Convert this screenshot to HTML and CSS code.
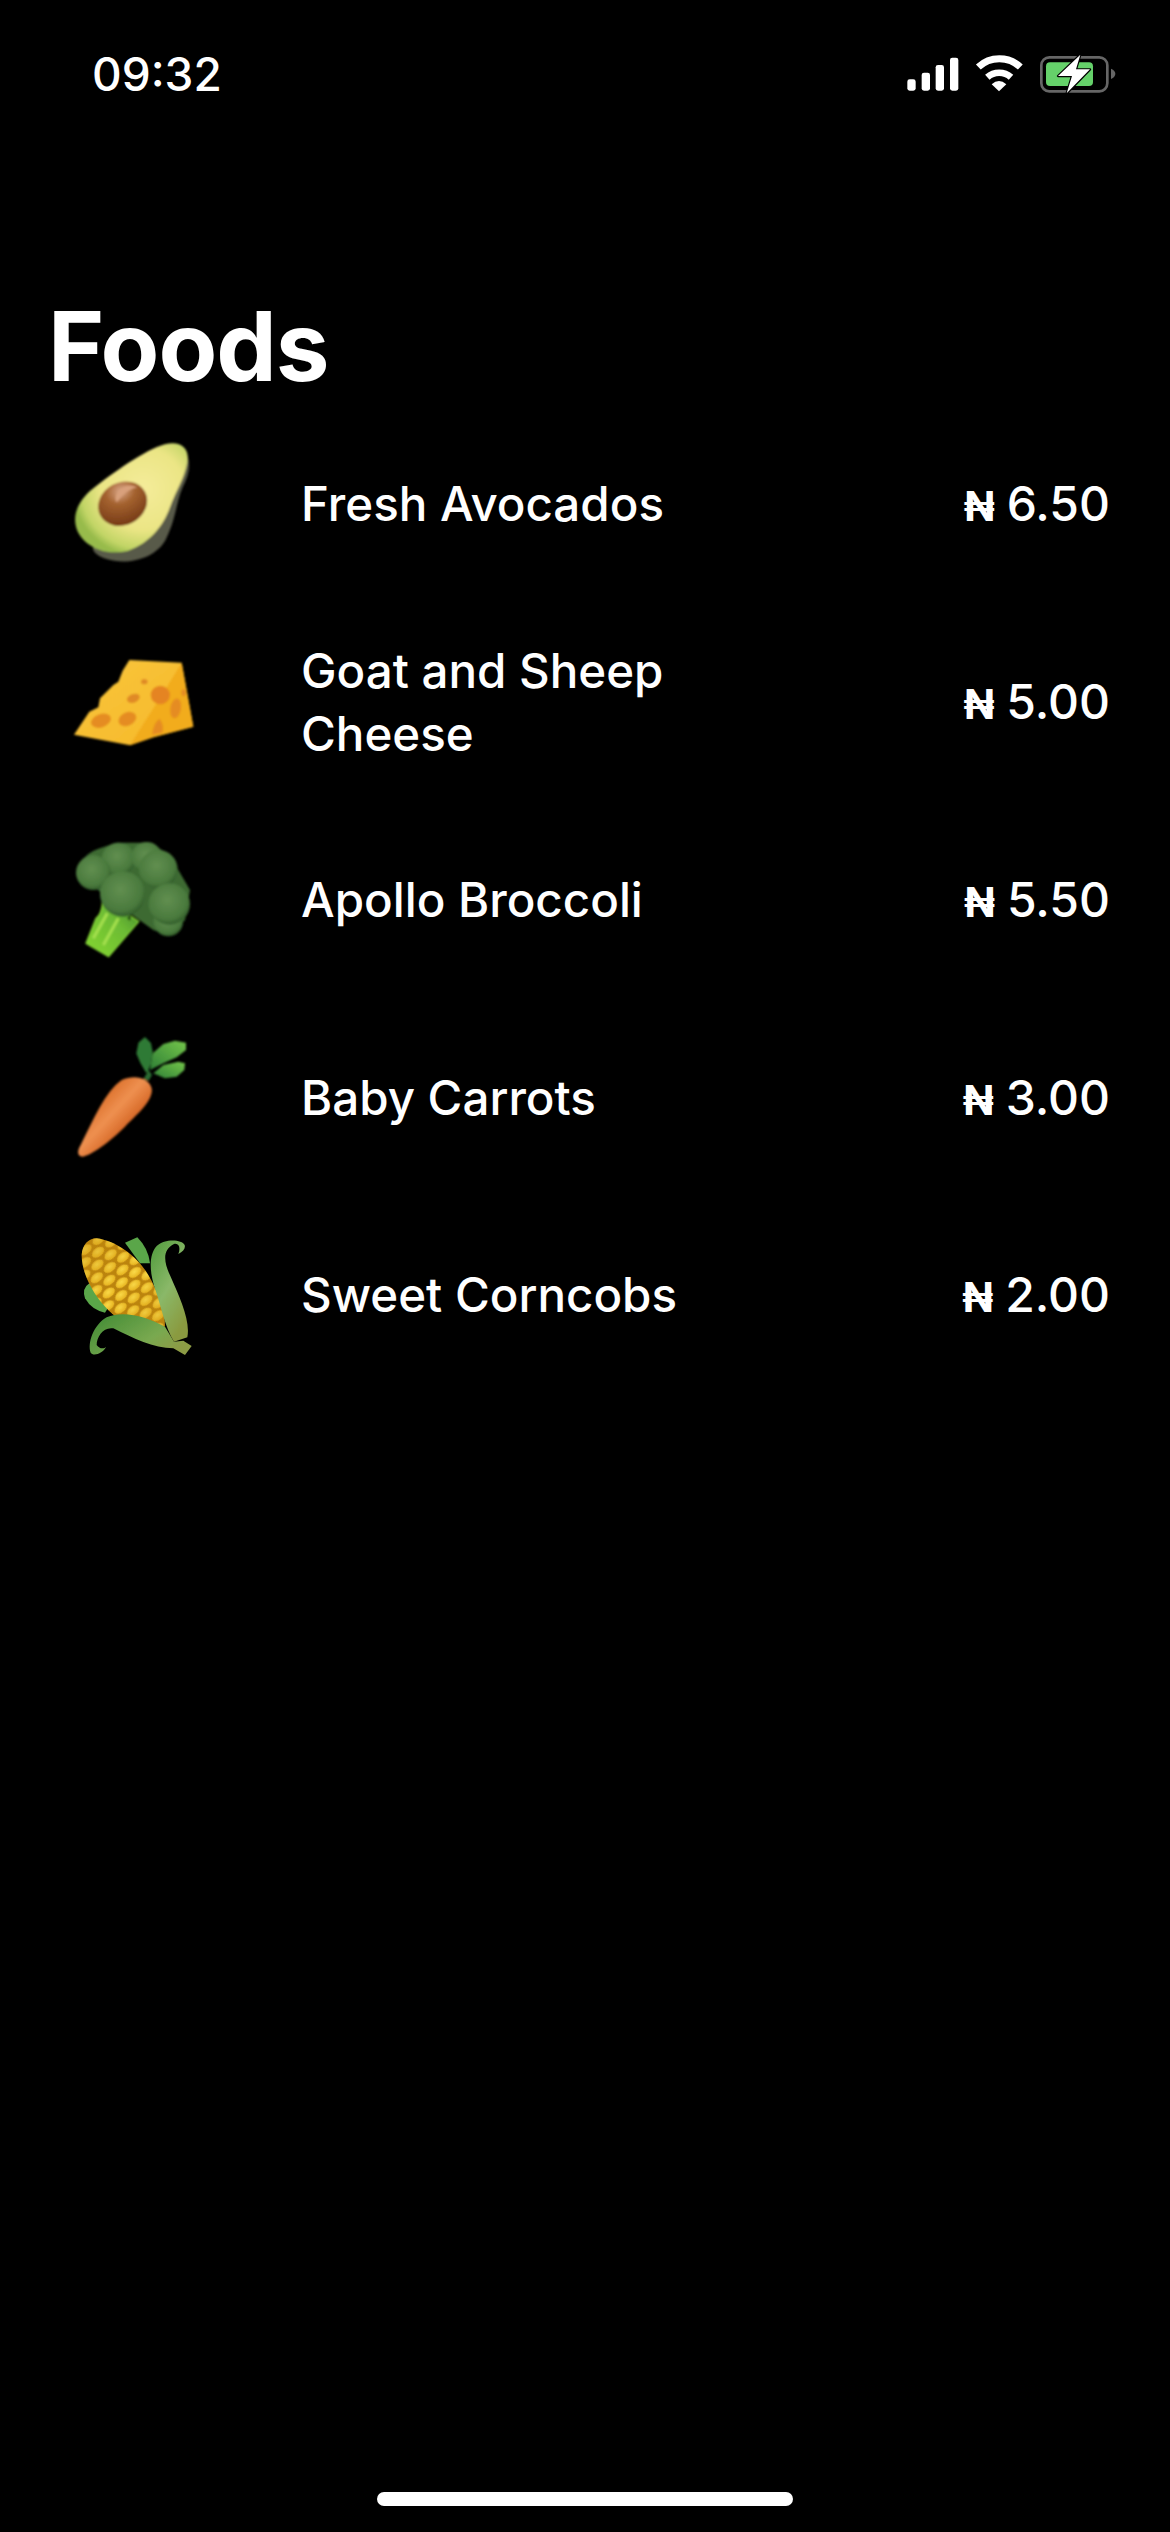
FILE: index.html
```html
<!DOCTYPE html>
<html lang="en">
<head>
<meta charset="utf-8">
<title>Foods</title>
<link rel="stylesheet" href="styles.css">
</head>
<body>
<div class="screen">
  <header class="status-bar">
    <span class="time">09:32</span>
    <svg class="status-icons" viewBox="0 0 810 240" aria-hidden="true">
      <rect x="112" y="148" width="25" height="34" rx="7" fill="#fff"/>
      <rect x="155" y="128" width="25" height="54" rx="7" fill="#fff"/>
      <rect x="197" y="105" width="25" height="77" rx="7" fill="#fff"/>
      <rect x="240" y="83" width="25" height="99" rx="7" fill="#fff"/>
      <path d="M325 111 A92 92 0 0 1 451 111" fill="none" stroke="#fff" stroke-width="21" stroke-linecap="butt"/>
      <path d="M352 142 A53 53 0 0 1 423 142" fill="none" stroke="#fff" stroke-width="20"/>
      <path d="M365 163 Q387 143 409 163 L387 184 Z" fill="#fff"/>
      <rect x="514" y="82" width="198" height="102" rx="24" fill="none" stroke="#666" stroke-width="8"/>
      <rect x="528" y="97" width="141" height="71" rx="12" fill="#65d16a"/>
      <path d="M723 116 Q736 122 736 131 Q736 141 723 147 Z" fill="#666"/>
      <path d="M631 74 L564 138 L606 138 L590 190 L660 118 L618 118 Z" fill="#fff" stroke="#000" stroke-width="7" stroke-linejoin="round" paint-order="stroke"/>
    </svg>
  </header>

  <h1 class="title">Foods</h1>

  <ul class="food-list">
    <li class="food-row">
      <svg class="food-pic" viewBox="0 0 510 510" aria-hidden="true">
        <defs>
          <radialGradient id="av-flesh" cx="0.6" cy="0.42" r="0.62">
            <stop offset="0" stop-color="#f5ec9a"/><stop offset="0.6" stop-color="#ebe585"/><stop offset="0.88" stop-color="#c2d566"/><stop offset="1" stop-color="#97bb4b"/>
          </radialGradient>
          <radialGradient id="av-pit" cx="0.58" cy="0.22" r="0.85">
            <stop offset="0" stop-color="#d9a688"/><stop offset="0.35" stop-color="#a4622f"/><stop offset="1" stop-color="#6f3412"/>
          </radialGradient>
          <filter id="soft1"><feGaussianBlur stdDeviation="3"/></filter>
        </defs>
        <g filter="url(#soft1)">
          <path d="M400 90 C428 125 418 165 398 205 C378 250 378 300 348 360 C318 420 230 440 170 420 C140 410 125 395 130 385 L300 250 Z" fill="#595a4a"/>
          <path d="M345 76 C392 64 420 88 412 130 C403 180 378 215 360 265 C340 320 300 372 235 395 C170 412 105 385 82 335 C62 285 90 240 130 208 C185 165 285 92 345 76 Z" fill="url(#av-flesh)"/>
          <ellipse cx="218" cy="254" rx="76" ry="64" transform="rotate(-28 218 254)" fill="url(#av-pit)"/>
          <path d="M205 215 Q230 190 262 205 Q235 208 200 250 Q190 235 205 215 Z" fill="#d9a07c"/>
        </g>
      </svg>
      <span class="food-name">Fresh Avocados</span>
      <span class="food-price"><span class="naira">₦</span> 6.50</span>
    </li>
    <li class="food-row">
      <svg class="food-pic" viewBox="0 -39 510 510" aria-hidden="true">
        <defs>
          <linearGradient id="ch-top" x1="0" y1="0" x2="1" y2="1">
            <stop offset="0" stop-color="#f9c63d"/><stop offset="1" stop-color="#f6b828"/>
          </linearGradient>
          <filter id="soft2"><feGaussianBlur stdDeviation="2.5"/></filter>
        </defs>
        <g filter="url(#soft2)">
          <path d="M238 90 L395 98 L430 290 L310 322 L240 346 L72 314 L118 245 L145 232 L150 205 L190 165 L205 155 L218 122 Z" fill="url(#ch-top)"/>
          <path d="M395 98 L430 290 L310 322 L240 346 Q280 280 320 220 Z" fill="#f2ac1f"/>
          <ellipse cx="153" cy="272" rx="31" ry="20" transform="rotate(-20 153 272)" fill="#e58c20"/>
          <ellipse cx="232" cy="267" rx="28" ry="20" transform="rotate(-25 232 267)" fill="#e58c20"/>
          <ellipse cx="250" cy="205" rx="20" ry="13" transform="rotate(-20 250 205)" fill="#e08a25"/>
          <ellipse cx="283" cy="155" rx="10" ry="8" fill="#df8a25"/>
          <ellipse cx="331" cy="195" rx="29" ry="28" fill="#e58420"/>
          <ellipse cx="377" cy="235" rx="16" ry="30" transform="rotate(10 377 235)" fill="#e58c20"/>
          <ellipse cx="401" cy="188" rx="7" ry="10" fill="#e58c20"/>
          <path d="M306 314 Q310 280 328 266 Q342 280 338 308 Z" fill="#e58c20"/>
        </g>
      </svg>
      <span class="food-name">Goat and Sheep<br>Cheese</span>
      <span class="food-price"><span class="naira">₦</span> 5.00</span>
    </li>
    <li class="food-row">
      <svg class="food-pic" viewBox="0 -18 510 510" aria-hidden="true">
        <defs>
          <linearGradient id="br-stem" x1="0" y1="1" x2="1" y2="0">
            <stop offset="0" stop-color="#86d832"/><stop offset="0.6" stop-color="#6cbb34"/><stop offset="1" stop-color="#3f8428"/>
          </linearGradient>
          <radialGradient id="br-head" cx="0.45" cy="0.4" r="0.62">
            <stop offset="0" stop-color="#618f50"/><stop offset="0.75" stop-color="#4a7a3d"/><stop offset="1" stop-color="#2f5a28"/>
          </radialGradient>
          <filter id="soft3"><feGaussianBlur stdDeviation="3"/></filter>
        </defs>
        <g filter="url(#soft3)">
          <path d="M158 242 Q155 285 138 295 L108 370 L176 410 L266 305 L200 260 Z" fill="url(#br-stem)" stroke="#7fcf34" stroke-width="4" stroke-linejoin="round"/>
          <path d="M160 375 L205 295 M130 355 L172 280" fill="none" stroke="#a4e04e" stroke-width="9"/>
          <path d="M80 150 Q100 100 150 85 L200 68 L290 68 Q345 80 385 150 L420 210 L405 300 L360 348 L310 330 L265 298 L150 215 Z" fill="#3c6a33"/>
          <circle cx="205" cy="118" r="50" fill="url(#br-head)"/>
          <circle cx="290" cy="112" r="46" fill="url(#br-head)"/>
          <circle cx="325" cy="148" r="58" fill="url(#br-head)"/>
          <circle cx="130" cy="158" r="52" fill="url(#br-head)"/>
          <circle cx="355" cy="305" r="44" fill="url(#br-head)"/>
          <circle cx="358" cy="252" r="62" fill="url(#br-head)"/>
          <circle cx="218" cy="222" r="68" fill="url(#br-head)"/>
          <path d="M232 295 L244 282 L240 302 Z" fill="#16300f"/>
        </g>
      </svg>
      <span class="food-name">Apollo Broccoli</span>
      <span class="food-price"><span class="naira">₦</span> 5.50</span>
    </li>
    <li class="food-row">
      <svg class="food-pic" viewBox="0 -24 510 510" aria-hidden="true">
        <defs>
          <linearGradient id="ca-body" x1="0.25" y1="0.25" x2="0.75" y2="0.75">
            <stop offset="0" stop-color="#d96c26"/><stop offset="0.42" stop-color="#ee9050"/><stop offset="0.75" stop-color="#d96c2a"/><stop offset="1" stop-color="#c2521a"/>
          </linearGradient>
          <linearGradient id="ca-leaf" x1="0" y1="1" x2="1" y2="0">
            <stop offset="0" stop-color="#2f7f36"/><stop offset="1" stop-color="#74c64a"/>
          </linearGradient>
          <filter id="soft4"><feGaussianBlur stdDeviation="2.5"/></filter>
        </defs>
        <g filter="url(#soft4)">
          <path d="M280 178 L296 150 L306 165 L296 182 Z" fill="#2c6a30"/>
          <path d="M290 155 L275 130 L262 100 L268 70 L285 55 L300 70 L305 95 L300 130 Z" fill="#2f7a36" stroke="#2f7a36" stroke-width="6" stroke-linejoin="round"/>
          <path d="M300 150 L308 100 L340 72 L375 62 L408 68 L408 90 L380 112 L340 130 Z" fill="url(#ca-leaf)"/>
          <path d="M310 160 L340 135 L385 125 L405 130 L403 150 L380 170 L345 175 Z" fill="url(#ca-leaf)"/>
          <path d="M215 180 C250 165 295 170 305 205 C312 240 260 285 225 320 C180 365 125 405 98 410 C80 410 82 390 92 375 C130 300 165 215 215 180 Z" fill="url(#ca-body)"/>
        </g>
      </svg>
      <span class="food-name">Baby Carrots</span>
      <span class="food-price"><span class="naira">₦</span> 3.00</span>
    </li>
    <li class="food-row">
      <svg class="food-pic" viewBox="0 -30 510 510" aria-hidden="true">
        <defs>
          <radialGradient id="co-seed" cx="0.5" cy="0.4" r="0.6">
            <stop offset="0" stop-color="#fbdc4a"/><stop offset="1" stop-color="#e8b41f"/>
          </radialGradient>
          <pattern id="co-kern" width="50" height="58" patternUnits="userSpaceOnUse" patternTransform="rotate(-38) translate(4 6)">
            <rect width="50" height="58" fill="#bb8410"/>
            <ellipse cx="25" cy="14" rx="21" ry="13" fill="url(#co-seed)"/>
            <ellipse cx="0" cy="43" rx="21" ry="13" fill="url(#co-seed)"/>
            <ellipse cx="50" cy="43" rx="21" ry="13" fill="url(#co-seed)"/>
          </pattern>
          <linearGradient id="co-shade" x1="0" y1="0" x2="1" y2="1">
            <stop offset="0" stop-color="#c08610" stop-opacity="0.4"/><stop offset="0.5" stop-color="#c08610" stop-opacity="0"/><stop offset="1" stop-color="#c08610" stop-opacity="0.3"/>
          </linearGradient>
          <linearGradient id="co-husk" x1="0" y1="0" x2="0.6" y2="1">
            <stop offset="0" stop-color="#4f9a3c"/><stop offset="0.55" stop-color="#8ab868"/><stop offset="1" stop-color="#8a9a3f"/>
          </linearGradient>
          <linearGradient id="co-husk2" x1="0" y1="0" x2="1" y2="0.6">
            <stop offset="0" stop-color="#3f8a33"/><stop offset="0.7" stop-color="#79a950"/><stop offset="1" stop-color="#8c9b45"/>
          </linearGradient>
          <filter id="soft5"><feGaussianBlur stdDeviation="2"/></filter>
        </defs>
        <g filter="url(#soft5)">
          <path d="M225 68 L262 52 Q295 85 300 130 L270 130 Z" fill="#5aa648"/>
          <path d="M118 190 Q95 205 105 235 Q125 270 165 278 L175 262 Z" fill="#5aa648"/>
          <path d="M140 55 C195 62 260 105 295 165 C325 215 345 275 345 320 L200 292 C150 255 95 175 95 105 C97 75 115 55 140 55 Z" fill="url(#co-kern)"/>
          <path d="M140 55 C195 62 260 105 295 165 C325 215 345 275 345 320 L200 292 C150 255 95 175 95 105 C97 75 115 55 140 55 Z" fill="url(#co-shade)"/>
          <path d="M404 75 C395 58 345 55 320 78 C295 105 298 160 318 215 C335 265 345 320 372 365 L412 352 C422 300 388 230 362 170 C342 130 335 90 372 72 C388 68 392 85 385 102 C400 95 407 85 404 75 Z" fill="url(#co-husk)"/>
          <path d="M122 398 C112 370 130 315 170 292 C220 270 290 290 345 320 L372 365 L400 362 L425 378 L405 405 L370 385 C310 385 250 355 190 325 C160 320 140 350 140 375 C150 390 165 385 168 380 C160 400 130 410 122 398 Z" fill="url(#co-husk2)"/>
        </g>
      </svg>
      <span class="food-name">Sweet Corncobs</span>
      <span class="food-price"><span class="naira">₦</span> 2.00</span>
    </li>
  </ul>

  <div class="home-indicator"></div>
</div>
</body>
</html>
```
FILE: styles.css
```css
* {
  box-sizing: border-box;
}

html,
body {
  margin: 0;
  padding: 0;
  background: #000;
}

.screen {
  display: flex;
  flex-direction: column;
  height: 2532px;
  overflow: hidden;
  background: #000;
  color: #fff;
  font-family: Inter, "Liberation Sans", sans-serif;
}

.status-bar {
  display: flex;
  justify-content: space-between;
  align-items: center;
  height: 80px;
  margin-top: 30px;
  padding: 0 30px 0 92px;
}

.time {
  font-size: 46px;
  font-weight: 500;
  line-height: 1;
  margin-top: 8px;
}

.status-icons {
  width: 270px;
  height: 80px;
  display: block;
}

.title {
  margin: 181px 0 0 48px;
  font-size: 96px;
  font-weight: 700;
  line-height: 110px;
  letter-spacing: -1px;
}

.food-list {
  list-style: none;
  margin: 4px 0 0;
  padding: 0 60px 0 50px;
}

.food-row {
  display: flex;
  align-items: center;
  height: 197.75px;
}

.food-pic {
  flex: none;
  width: 170px;
  height: 170px;
  display: block;
  margin-right: 81px;
}

.food-name {
  flex: 1;
  font-size: 47.5px;
  font-weight: 550;
  line-height: 63px;
}

.food-price {
  flex: none;
  margin-top: 3px;
  font-size: 48px;
  font-weight: 550;
  line-height: 63px;
  word-spacing: -1px;
}

.naira {
  display: inline-block;
  font-size: 41px;
  font-weight: 700;
}

.home-indicator {
  width: 416px;
  height: 14px;
  margin: auto auto 26px;
  border-radius: 7px;
  background: #fff;
}
```
